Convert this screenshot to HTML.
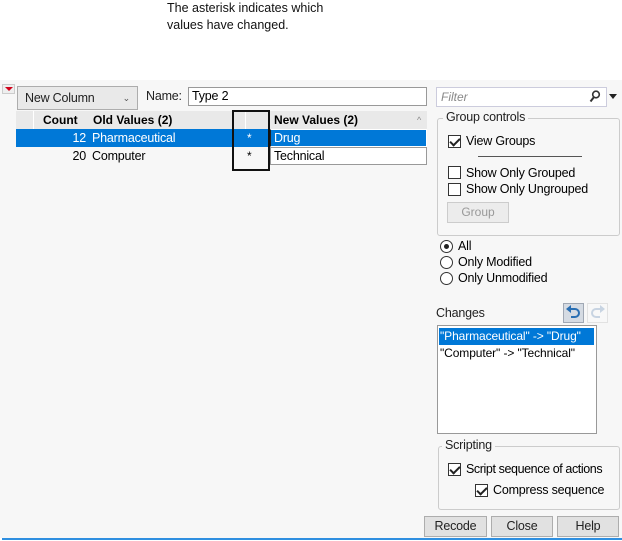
<!DOCTYPE html>
<html><head><style>
*{margin:0;padding:0;box-sizing:border-box}
body{width:622px;height:541px;background:#fff;position:relative;overflow:hidden;font-family:"Liberation Sans",sans-serif;font-size:12px;color:#000}
.a{position:absolute}
.cb{position:absolute;width:13px;height:13px;border:1px solid #333;background:#fff}
.cb.on::after{content:"";position:absolute;left:3px;top:0px;width:4px;height:8px;border:solid #222;border-width:0 2px 2px 0;transform:rotate(45deg)}
.rb{position:absolute;width:13px;height:13px;border:1px solid #333;border-radius:50%;background:#fff}
.btn{position:absolute;border:1px solid #adadad;background:#e1e1e1;text-align:center;line-height:18px;font-size:12px;color:#222}
.grp{position:absolute;border:1px solid #ccc;border-radius:3px}
.lg{position:absolute;background:#f7f7f7;padding:0 3px;font-size:12px;color:#222}
.t{font-size:12.5px;letter-spacing:-0.2px}
</style></head><body>
<div class="a" style="left:167px;top:0;font-size:12.5px;line-height:17px;color:#111">The asterisk indicates which<br>values have changed.</div>
<div class="a" style="left:0;top:80px;width:622px;height:458px;background:#f7f7f7"></div>
<div class="a" style="left:2px;top:538px;width:620px;height:2px;background:#2f8fe0"></div>
<div class="a" style="left:2px;top:84px;width:13px;height:10px;background:#eee;border:1px solid #ccc"></div>
<div class="a" style="left:5px;top:87px;width:0;height:0;border-left:4px solid transparent;border-right:4px solid transparent;border-top:4px solid #d0021b"></div>
<div class="a t" style="left:17px;top:86px;width:121px;height:24px;border:1px solid #adadad;background:#e9e9e9;padding-left:7px;line-height:22px;color:#222">New Column<span style="position:absolute;right:7px;font-size:9px;color:#555">&#8964;</span></div>
<div class="a t" style="left:146px;top:89px;color:#222">Name:</div>
<div class="a t" style="left:188px;top:87px;width:239px;height:19px;border:1px solid #999;background:#fff;padding-left:3px;line-height:17px">Type 2</div>
<div class="a" style="left:16px;top:111px;width:411px;height:18px;background:#e9e9e9"></div>
<div class="a" style="left:16px;top:111px;width:18px;height:18px;border-right:1px solid #fff"></div>
<div class="a" style="left:43px;top:111px;font-weight:bold;line-height:18px">Count</div>
<div class="a" style="left:93px;top:111px;font-weight:bold;line-height:18px">Old Values (2)</div>
<div class="a" style="left:274px;top:111px;font-weight:bold;line-height:18px">New Values (2)</div>
<div class="a" style="left:417px;top:111px;font-size:9px;line-height:18px;color:#888">^</div>
<div class="a" style="left:16px;top:129px;width:411px;height:18px;background:#0078d7"></div>
<div class="a t" style="left:60px;top:129px;width:26px;text-align:right;color:#fff;line-height:18px">12</div>
<div class="a t" style="left:92px;top:129px;color:#fff;line-height:18px">Pharmaceutical</div>
<div class="a" style="left:247px;top:129px;color:#fff;line-height:18px">*</div>
<div class="a t" style="left:270px;top:129px;width:157px;height:18px;border:1px solid #fff;border-left:1px solid #222;padding-left:3px;color:#fff;line-height:16px">Drug</div>
<div class="a t" style="left:60px;top:147px;width:26px;text-align:right;line-height:18px">20</div>
<div class="a t" style="left:92px;top:147px;line-height:18px">Computer</div>
<div class="a" style="left:247px;top:147px;line-height:18px">*</div>
<div class="a t" style="left:270px;top:147px;width:157px;height:18px;border:1px solid #999;background:#fff;padding-left:3px;line-height:16px">Technical</div>
<div class="a" style="left:232px;top:110px;width:38px;height:61px;border:2px solid #111"></div>
<div class="a" style="left:245px;top:112px;width:1px;height:17px;background:#fff"></div>
<div class="a" style="left:436px;top:87px;width:171px;height:20px;border:1px solid #ccd;background:#fff;padding-left:4px;line-height:18px;font-style:italic;color:#888">Filter</div>
<svg class="a" style="left:589px;top:90px" width="12" height="13" viewBox="0 0 12 13"><circle cx="7" cy="4.5" r="3.3" fill="none" stroke="#333" stroke-width="1.6"/><path d="M5 7 L1.5 11.5" stroke="#333" stroke-width="2"/></svg>
<div class="a" style="left:609px;top:94px;width:0;height:0;border-left:4px solid transparent;border-right:4px solid transparent;border-top:5px solid #222"></div>
<div class="grp" style="left:437px;top:118px;width:183px;height:118px"></div>
<div class="lg t" style="left:443px;top:110px">Group controls</div>
<div class="cb on" style="left:448px;top:135px"></div>
<div class="a t" style="left:466px;top:134px">View Groups</div>
<div class="a" style="left:478px;top:156px;width:104px;height:1px;background:#555"></div>
<div class="cb" style="left:448px;top:166px"></div>
<div class="a t" style="left:466px;top:166px">Show Only Grouped</div>
<div class="cb" style="left:448px;top:183px"></div>
<div class="a t" style="left:466px;top:182px">Show Only Ungrouped</div>
<div class="btn" style="left:447px;top:202px;width:62px;height:21px;background:#ececec;border-color:#ccc;color:#999;line-height:19px">Group</div>
<div class="rb" style="left:440px;top:240px"></div><div class="a" style="left:444px;top:244px;width:5px;height:5px;border-radius:50%;background:#222"></div>
<div class="a t" style="left:458px;top:239px">All</div>
<div class="rb" style="left:440px;top:256px"></div>
<div class="a t" style="left:458px;top:255px">Only Modified</div>
<div class="rb" style="left:440px;top:272px"></div>
<div class="a t" style="left:458px;top:271px">Only Unmodified</div>
<div class="a t" style="left:436px;top:306px;color:#222">Changes</div>
<div class="a" style="left:563px;top:303px;width:21px;height:20px;background:#d5dbe3;border:1px solid #a0a8b4"></div>
<svg class="a" style="left:565px;top:305px" width="17" height="16" viewBox="0 0 17 16"><path d="M5 4 H10 A4 4 0 0 1 10 12 H6" fill="none" stroke="#2a6fb3" stroke-width="2"/><path d="M1 4 L6 0 V8 Z" fill="#2a6fb3"/></svg>
<div class="a" style="left:587px;top:303px;width:21px;height:20px;border:1px solid #e2e2e2;background:#f8f8f8"></div>
<svg class="a" style="left:589px;top:305px" width="17" height="16" viewBox="0 0 17 16"><path d="M12 4 H7 A4 4 0 0 0 7 12 H11" fill="none" stroke="#c8d4e2" stroke-width="2"/><path d="M16 4 L11 0 V8 Z" fill="#c8d4e2"/></svg>
<div class="a" style="left:437px;top:325px;width:160px;height:109px;border:1px solid #999;background:#fff"></div>
<div class="a" style="left:439px;top:328px;width:155px;height:17px;background:#0078d7;color:#fff;line-height:17px;font-size:12px;letter-spacing:-0.1px;padding-left:1px;white-space:nowrap">"Pharmaceutical" -&gt; "Drug"</div>
<div class="a" style="left:439px;top:345px;line-height:17px;font-size:12px;letter-spacing:-0.1px;padding-left:1px;white-space:nowrap">"Computer" -&gt; "Technical"</div>
<div class="grp" style="left:438px;top:446px;width:182px;height:64px"></div>
<div class="lg t" style="left:442px;top:438px">Scripting</div>
<div class="cb on" style="left:448px;top:463px"></div>
<div class="a t" style="left:466px;top:462px;letter-spacing:-0.4px">Script sequence of actions</div>
<div class="cb on" style="left:475px;top:484px"></div>
<div class="a t" style="left:493px;top:483px">Compress sequence</div>
<div class="btn t" style="left:424px;top:516px;width:63px;height:21px">Recode</div>
<div class="btn t" style="left:491px;top:516px;width:62px;height:21px">Close</div>
<div class="btn t" style="left:557px;top:516px;width:62px;height:21px">Help</div>
</body></html>
